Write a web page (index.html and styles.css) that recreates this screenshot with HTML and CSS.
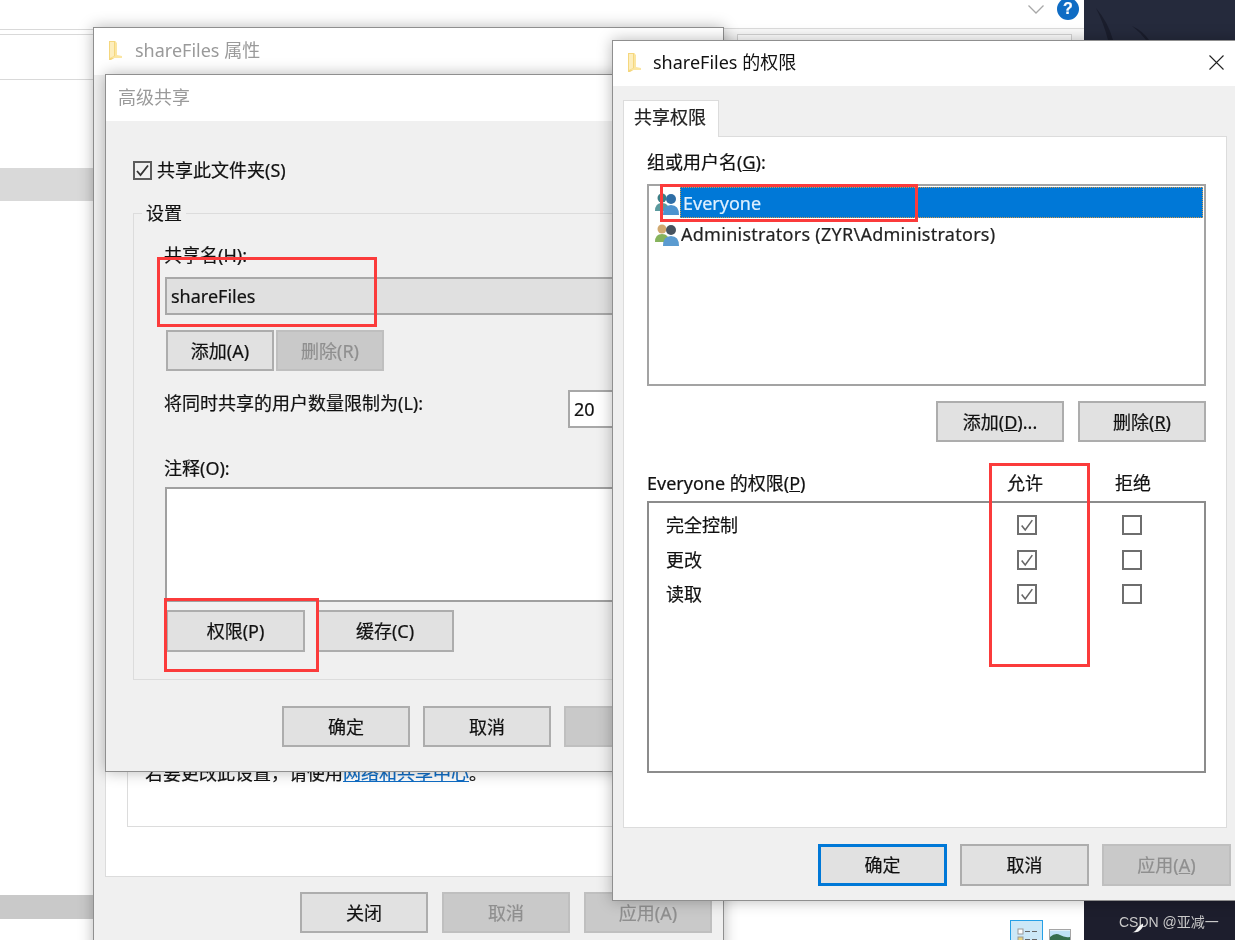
FILE: index.html
```html
<!DOCTYPE html>
<html lang="zh-CN">
<head>
<meta charset="utf-8">
<title>shareFiles 的权限</title>
<link rel="stylesheet" href="styles.css">
</head>
<body>
<svg class="defs" width="0" height="0" aria-hidden="true">
  <defs>
    <symbol id="folder" viewBox="0 0 14 20">
      <path d="M0 1h6l1 1.500v14.500l-5 3h-2z" fill="#f5d77e"/>
      <path d="M6 1l2 2v12l5 1v2h-11l4-2z" fill="#fbe6a2"/>
      <path d="M1 2h4v14l-4 2z" fill="#fdeebd"/>
    </symbol>
  </defs>
</svg>
<main class="desktop">
  <div class="bg-line bg-line-a"></div>
  <div class="bg-line bg-line-b"></div>
  <div class="bg-line bg-line-c"></div>
  <div class="bg-band bg-band-a"></div>
  <div class="bg-band bg-band-b"></div>
  <div class="bg-top-line"></div>
  <div class="bg-top-box"></div>
  <svg class="chevron" viewBox="0 0 16 9"><path d="M.5.500L8 8l7.500-7.500" fill="none" stroke="#a8a8a8" stroke-width="1.300"/></svg>
  <div class="help">?</div>
  <div class="dark dark-top">
    <svg class="dark-art" viewBox="0 0 151 40"><path d="M12 8q8 16 12 32h5q-5-18-17-32zM48 26q8 6 14 14h3q-6-9-17-14z" fill="#1a1d2c"/></svg>
  </div>
  <div class="dark dark-bottom">
    <span class="csdn">CSDN @亚减一</span>
    <svg class="leaf" viewBox="0 0 16 14"><path d="M1 13q4 0 6-4t8-7q1 4-3 8t-8 3z" fill="#f2f2f2"/></svg>
  </div>
  <div class="view-btn view-list">
    <svg viewBox="0 0 21 20"><rect x="1" y="1" width="5" height="5" fill="#fff" stroke="#999"/><rect x="1" y="9" width="5" height="5" fill="#e8d27a" stroke="#999"/><rect x="1" y="17" width="5" height="5" fill="#fff" stroke="#999"/><path d="M8 3.500h5M15 3.500h5M8 11.500h5M15 11.500h5" stroke="#666" stroke-width="1.200"/></svg>
  </div>
  <div class="view-btn view-pic">
    <svg viewBox="0 0 22 12"><rect width="22" height="12" fill="#bfe3f5"/><path d="M0 7q6-5 11-2t11 2v5h-22z" fill="#356f4c"/></svg>
  </div>

  <section class="window win-props">
    <header class="titlebar titlebar-props">
      <svg class="folder"><use href="#folder"/></svg>
      <span class="title-muted">shareFiles 属性</span>
    </header>
    <div class="win-body">
      <div class="props-panel">
        <div class="props-box">
          <p class="props-note">若要更改此设置，请使用<a class="link">网络和共享中心</a>。</p>
        </div>
      </div>
      <div class="btn-row props-footer">
        <button class="btn">关闭</button>
        <button class="btn is-off">取消</button>
        <button class="btn is-off">应用(A)</button>
      </div>
    </div>
  </section>

  <section class="window win-adv">
    <header class="titlebar titlebar-adv"><span class="title-muted">高级共享</span></header>
    <div class="adv-body">
      <label class="check-row"><span class="check is-dark"><svg viewBox="0 0 15 15"><path d="M2 8l3.500 4L13 2.500" fill="none" stroke="#333" stroke-width="1.800"/></svg></span>共享此文件夹(S)</label>
      <fieldset class="settings">
        <legend>设置</legend>
        <div class="text">共享名(H):</div>
        <div class="field field-name">shareFiles</div>
        <div class="btn-row name-btns">
          <button class="btn btn-name">添加(A)</button>
          <button class="btn btn-name is-off">删除(R)</button>
        </div>
        <div class="limit-row">
          <div class="text limit-label">将同时共享的用户数量限制为(L):</div>
          <div class="field field-limit">20</div>
        </div>
        <div class="text note-label">注释(O):</div>
        <div class="note-area"></div>
        <div class="btn-row perm-btns">
          <button class="btn btn-perm">权限(P)</button>
          <button class="btn btn-cache">缓存(C)</button>
        </div>
      </fieldset>
      <div class="btn-row adv-footer">
        <button class="btn">确定</button>
        <button class="btn">取消</button>
        <button class="btn is-off"></button>
      </div>
    </div>
  </section>

  <section class="window win-perm">
    <header class="titlebar titlebar-perm">
      <svg class="folder"><use href="#folder"/></svg>
      <span class="title-dark">shareFiles 的权限</span>
      <svg class="close" viewBox="0 0 15 15"><path d="M.5.500l14 14M14.500.500l-14 14" stroke="#222" stroke-width="1.100"/></svg>
    </header>
    <div class="perm-body">
      <div class="tab">共享权限</div>
      <div class="perm-panel">
        <div class="text">组或用户名(<u>G</u>):</div>
        <div class="listbox">
          <div class="list-row">
            <svg class="user-icon" viewBox="0 0 26 26"><circle cx="8" cy="8" r="4.500" fill="#3c7f86"/><path d="M1 21q0-8 7-8t7 8z" fill="#5b9a9e"/><circle cx="17" cy="9" r="5" fill="#2f6ea6"/><path d="M9 25q0-10 8-10t8 10z" fill="#4d93cf"/></svg>
            <span class="list-text is-selected">Everyone</span>
          </div>
          <div class="list-row">
            <svg class="user-icon" viewBox="0 0 26 26"><circle cx="8" cy="8" r="4.500" fill="#d1a970"/><path d="M1 21q0-8 7-8t7 8z" fill="#86b35c"/><circle cx="17" cy="9" r="5" fill="#46525e"/><path d="M9 25q0-10 8-10t8 10z" fill="#5b9bd0"/></svg>
            <span class="list-text is-wide">Administrators (ZYR\Administrators)</span>
          </div>
        </div>
        <div class="btn-row list-btns">
          <button class="btn">添加(<u>D</u>)...</button>
          <button class="btn">删除(<u>R</u>)</button>
        </div>
        <div class="perm-head">
          <span class="text">Everyone 的权限(<u>P</u>)</span>
          <span class="text">允许</span>
          <span class="text">拒绝</span>
        </div>
        <div class="perm-table">
          <div class="perm-row">
            <span class="text">完全控制</span>
            <span class="check"><svg viewBox="0 0 18 18"><path d="M3 9.500l4 5L15 3.500" fill="none" stroke="#666" stroke-width="1.800"/></svg></span>
            <span class="check"></span>
          </div>
          <div class="perm-row">
            <span class="text">更改</span>
            <span class="check"><svg viewBox="0 0 18 18"><path d="M3 9.500l4 5L15 3.500" fill="none" stroke="#666" stroke-width="1.800"/></svg></span>
            <span class="check"></span>
          </div>
          <div class="perm-row">
            <span class="text">读取</span>
            <span class="check"><svg viewBox="0 0 18 18"><path d="M3 9.500l4 5L15 3.500" fill="none" stroke="#666" stroke-width="1.800"/></svg></span>
            <span class="check"></span>
          </div>
        </div>
      </div>
      <div class="btn-row perm-footer">
        <button class="btn btn-wide is-default">确定</button>
        <button class="btn btn-wide">取消</button>
        <button class="btn btn-wide is-off">应用(<u>A</u>)</button>
      </div>
    </div>
  </section>

  <div class="mark mark-name"></div>
  <div class="mark mark-perm"></div>
  <div class="mark mark-everyone"></div>
  <div class="mark mark-allow"></div>
</main>
</body>
</html>
```
FILE: styles.css
```css
* { box-sizing: border-box; }
html, body { margin: 0; padding: 0; height: 100%; background: #fff; overflow: hidden; }
body { font: 18px/24px "Noto Sans", "Noto Sans CJK SC", sans-serif; color: #111; }
.defs { position: absolute; }
.desktop { position: relative; width: 1235px; height: 940px; overflow: hidden; background: #fff; filter: blur(.4px); -webkit-text-stroke: .2px currentColor; }

/* things behind the windows */
.bg-line { position: absolute; left: 0; width: 100px; height: 1px; background: #d9d9d9; }
.bg-line-a { top: 29px; }
.bg-line-b { top: 34px; }
.bg-line-c { top: 79px; }
.bg-band { position: absolute; left: 0; width: 100px; }
.bg-band-a { top: 168px; height: 33px; background: #d9d9d9; }
.bg-band-b { top: 895px; height: 24px; background: #c9c9c9; }
.bg-top-line { position: absolute; left: 720px; top: 28px; width: 364px; height: 12px; background: #f9f9f9; border-top: 1px solid #dcdcdc; }
.bg-top-box { position: absolute; left: 737px; top: 34px; width: 335px; height: 8px; background: #fff; border: 1px solid #d4d4d4; }
.chevron { position: absolute; left: 1028px; top: 5px; width: 16px; height: 9px; }
.help { position: absolute; left: 1057px; top: -2px; width: 22px; height: 22px; border-radius: 50%; background: #0f6cc4; color: #fff; font: bold 16px/22px "Liberation Sans", sans-serif; text-align: center; }
.dark { position: absolute; left: 1084px; width: 151px; }
.dark-top { top: 0; height: 41px; background: #252a3c; }
.dark-art { display: block; width: 151px; height: 40px; }
.dark-bottom { top: 900px; height: 40px; background: #1d1e2d; }
.csdn { position: absolute; left: 35px; top: 10px; font: 14px/24px "Liberation Sans", "Noto Sans CJK SC", sans-serif; color: #c9c9c9; white-space: nowrap; -webkit-text-stroke: 0; }
.leaf { position: absolute; left: 47px; top: 22px; width: 13px; height: 11px; }
.view-btn { position: absolute; }
.view-list { left: 1010px; top: 920px; width: 33px; height: 24px; background: #cce8f7; border: 1px solid #26a0e6; padding: 7px 0 0 6px; }
.view-list svg { display: block; width: 21px; height: 20px; }
.view-pic { left: 1049px; top: 929px; width: 22px; height: 14px; border: 1px solid #a5a5a5; background: #fff; }
.view-pic svg { display: block; width: 20px; height: 12px; }

/* windows */
.window { position: absolute; display: flex; flex-direction: column; background: #f0f0f0; border: 1px solid #8f8f8f; box-shadow: 0 0 14px rgba(0, 0, 0, .28); }
.titlebar { flex: none; display: flex; align-items: center; background: #fff; }
.folder { flex: none; width: 14px; height: 20px; }
.title-muted { color: #9a9a9a; -webkit-text-stroke: 0; }
.title-dark { color: #111; -webkit-text-stroke: 0; }

.win-props { left: 93px; top: 27px; width: 631px; height: 930px; }
.titlebar-props { height: 47px; padding: 0 0 3px 15px; gap: 12px; }
.win-body { flex: 1; display: flex; flex-direction: column; }
.props-panel { margin: 26px 12px 0 11px; height: 776px; display: flex; flex-direction: column; justify-content: flex-end; background: #fff; border: 1px solid #dcdcdc; }
.props-box { margin: 0 0 49px 21px; height: 127px; border: 1px solid #dcdcdc; border-right: 0; padding: 60px 0 0 17px; }
.props-note { margin: 0; font-size: 18px; color: #111; white-space: nowrap; }
.link { color: #0f6cc4; text-decoration: underline; }
.props-footer { margin-top: 15px; padding-left: 206px; gap: 14px; }

.win-adv { left: 105px; top: 74px; width: 622px; height: 698px; }
.titlebar-adv { height: 46px; padding: 0 0 2px 12px; }
.adv-body { flex: 1; padding: 37px 0 0 27px; }
.check-row { display: flex; align-items: center; gap: 5px; height: 24px; }
.settings { width: 567px; margin: 19px 0 0; padding: 18px 0 27px 30px; border: 1px solid #dcdcdc; min-width: 0; }
.settings legend { margin-left: -22px; padding: 0 4px; line-height: 24px; }
.text { white-space: nowrap; }
.field { background: #fff; border: 2px solid #a8a8a8; white-space: nowrap; }
.field-name { margin: 10px 0 0 1px; width: 530px; height: 38px; background: #e0e0e0; padding: 5px 0 0 4px; }
.name-btns { margin: 15px 0 0 2px; gap: 2px; }
.limit-row { display: flex; margin-top: 19px; }
.limit-label { width: 404px; padding-top: 1px; }
.field-limit { width: 120px; height: 38px; padding: 5px 0 0 4px; }
.note-label { margin-top: 28px; }
.note-area { margin: 7px 0 0 1px; width: 530px; height: 115px; background: #fff; border: 2px solid #a0a0a0; border-right: 0; }
.perm-btns { margin: 8px 0 0 2px; gap: 11px; }
.adv-footer { margin: 26px 0 0 149px; gap: 13px; }

.win-perm { left: 612px; top: 40px; width: 630px; height: 861px; }
.titlebar-perm { position: relative; height: 45px; padding: 0 0 3px 15px; gap: 11px; }
.close { position: absolute; left: 596px; top: 14px; width: 15px; height: 15px; }
.perm-body { flex: 1; display: flex; flex-direction: column; }
.tab { position: relative; z-index: 1; width: 96px; height: 37px; margin: 14px 0 -1px 10px; padding: 4px 0 0 10px; background: #fff; border: 1px solid #dcdcdc; border-bottom: 0; color: #222; }
.perm-panel { width: 604px; height: 692px; margin-left: 10px; padding: 13px 0 0 23px; background: #fff; border: 1px solid #dcdcdc; }
.listbox { width: 559px; height: 202px; margin-top: 10px; padding: 1px 1px 2px 2px; border: 2px solid #a3a3a3; }
.list-row { display: flex; align-items: center; height: 31px; padding-left: 3px; }
.user-icon { flex: none; width: 26px; height: 26px; }
.list-text { white-space: nowrap; padding-left: 1px; color: #222; }
.list-text.is-wide { letter-spacing: .27px; }
.list-text.is-selected { flex: 1; height: 31px; line-height: 32px; background: #0078d7; color: #dff0ff; outline: 1px dotted #d59a4a; outline-offset: -1px; padding-left: 3px; }
.list-btns { justify-content: flex-end; width: 559px; margin-top: 15px; gap: 14px; }
.perm-head { display: grid; grid-template-columns: 360px 108px auto; margin-top: 29px; }
.perm-table { width: 559px; height: 272px; margin-top: 6px; padding: 10px 0 0 17px; border: 2px solid #8c8c8c; }
.perm-row { display: grid; grid-template-columns: 351px 105px 20px; align-items: center; height: 20px; margin-bottom: 14.500px; }
.check { display: block; flex: none; width: 20px; height: 20px; border: 2px solid #6e6e6e; background: #fff; }
.check svg { display: block; width: 100%; height: 100%; }
.check.is-dark { width: 19px; height: 19px; border-color: #5c5c5c; background: transparent; }
.perm-footer { margin-top: 16px; padding-left: 205px; gap: 13px; }

/* buttons */
.btn-row { display: flex; }
.btn { flex: none; width: 128px; height: 41px; padding: 0; margin: 0; font: inherit; color: #111; text-align: center; background: #e1e1e1; border: 2px solid #adadad; white-space: nowrap; -webkit-text-stroke: inherit; }
.btn.btn-name { width: 108px; }
.btn.btn-perm { width: 139px; height: 42px; }
.btn.btn-cache { width: 138px; height: 42px; }
.btn.btn-wide { width: 129px; height: 42px; }
.btn.is-off { background: #c9c9c9; border-color: #bfbfbf; color: #8f8f8f; }
.btn.is-default { border: 3px solid #0078d7; }

/* red annotations drawn over everything */
.mark { position: absolute; border: 3px solid #fb3b3b; }
.mark-name { left: 157px; top: 257px; width: 220px; height: 70px; }
.mark-perm { left: 164px; top: 598px; width: 155px; height: 74px; }
.mark-everyone { left: 660px; top: 184px; width: 258px; height: 38px; }
.mark-allow { left: 989px; top: 463px; width: 101px; height: 204px; }
```
